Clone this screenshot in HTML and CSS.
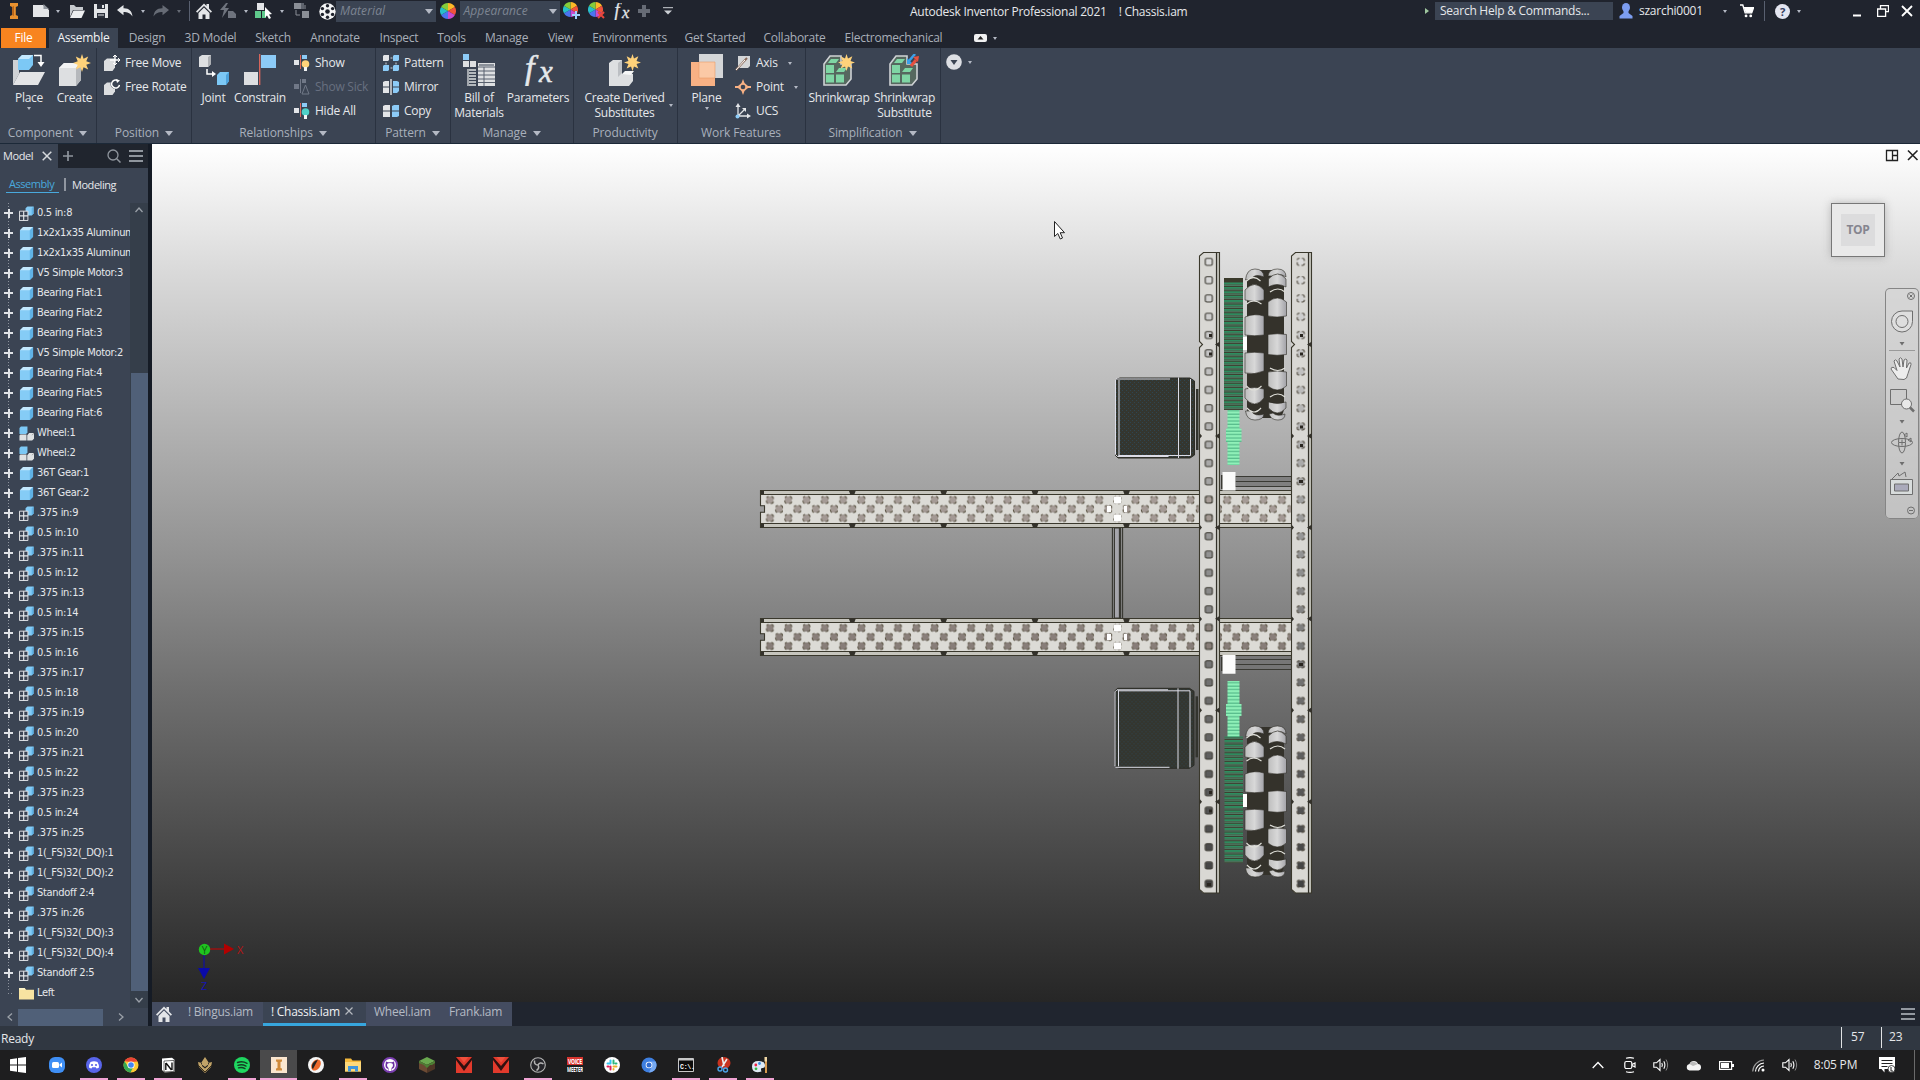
FILE: index.html
```html
<!DOCTYPE html>
<html lang="en">
<head>
<meta charset="utf-8">
<title>Autodesk Inventor Professional 2021</title>
<link rel="stylesheet" href="styles.css">
</head>
<body>
<svg class="defs" width="0" height="0">
  <defs>
    <symbol id="part" viewBox="0 0 16 16"><path d="M1 4.500 4.500 1H15v10.500L11.500 15H1z" fill="#85ccf6"/><path d="M1 4.500 4.500 1H15l-3.500 3.500z" fill="#c4e8fd"/><path d="M11.500 4.500 15 1v10.500L11.500 15z" fill="#5fb2e6"/></symbol>
    <symbol id="multi" viewBox="0 0 16 16"><path d="M7 2.500 9 .5h6.500v7.500l-2 2H7z" fill="#85ccf6"/><path d="M13.500 2.500l2-2V8l-2 2z" fill="#5fb2e6"/><path d="M.5 5.500h9v10h-9z" fill="#3b4453" stroke="#e6e9ec"/><path d="M5 5.500v10M.5 10.500h9" stroke="#e6e9ec" stroke-width="1.200"/></symbol>
    <symbol id="asm" viewBox="0 0 16 16"><path d="M.5 2 2 .5h7V7L7.500 8.500h-7z" fill="#7cc8f5"/><path d="M.5 10 1.500 9H8v6.500H.5zM8.800 9.800l2-2.300H16v6l-2 2H8.800z" fill="#dfe2e4"/><path d="M14 9.800 16 7.500" stroke="#999"/></symbol>
    <symbol id="wheel" viewBox="0 0 16 16"><path d="M8 8V0a8 8 0 0 1 6.900 4z" fill="#fdb827"/><path d="M8 8l6.900-4a8 8 0 0 1 0 8z" fill="#f0533c"/><path d="M8 8l6.900 4A8 8 0 0 1 8 16z" fill="#c94bd0"/><path d="M8 8v8a8 8 0 0 1-6.900-4z" fill="#4a74f0"/><path d="M8 8l-6.900 4a8 8 0 0 1 0-8z" fill="#27bfc9"/><path d="M8 8 1.100 4A8 8 0 0 1 8 0z" fill="#85cc3a"/></symbol>
    <symbol id="star" viewBox="0 0 16 16"><path d="M8 0l1.400 4.200L13.500 2.200 11.800 6.500 16 8l-4.200 1.500 1.700 4.200-4.100-1.900L8 16l-1.400-4.200-4.100 1.900 1.700-4.200L0 8l4.200-1.500-1.700-4.300 4.100 2z" fill="#ffd27a"/></symbol>
    <symbol id="home" viewBox="0 0 16 16"><path d="M0 8.500 8 .5l2.500 2.500V1h2.500v4.500l3 3-1.200 1.200L8 3 1.200 9.700z" fill="#e3e5e8"/><path d="M2.500 10 8 4.500l5.500 5.500v6H9.500v-4.500h-3V16h-4z" fill="#e3e5e8"/></symbol>
    <symbol id="speaker" viewBox="0 0 16 14"><path d="M.8 4.800H3.500L7 1.500v11L3.500 9.200H.8z" fill="none" stroke="#fff" stroke-width="1.100"/><path d="M8.800 5q1.200 2 0 4M10.800 3.300q2.200 3.700 0 7.400" fill="none" stroke="#fff" stroke-width="1.100"/><path d="M13 1.500q3.300 5.500 0 11" fill="none" stroke="#888"/></symbol>
    <symbol id="vex" viewBox="0 0 16 16"><path d="M0 0h16v16H0z" fill="#e23a2c"/><path d="M0 3 8 14 16 3v-3l-8 9-8-9z" fill="#30100f"/><path d="M3.500 0h9L8 5.500z" fill="#f0503c"/></symbol>
    <symbol id="fx" viewBox="0 0 32 32"><g font-family="Liberation Serif" font-style="italic" fill="#e6e8ea" stroke="#e6e8ea" stroke-width=".5"><text x="3" y="25" font-size="34">f</text><text x="17" y="27.500" font-size="31">x</text></g></symbol>
  </defs>
</svg>

<header class="titlebar">
  <div class="qat">
    <svg viewBox="0 0 10 16" width="10" height="16"><path d="M1 0h8v3L6.800 4v8L9 13v3H1v-3l2.200-1V4L1 3z" fill="#e8912f"/><path d="M3.200 4 5 3v10l-1.800-1z" fill="#b5631a"/></svg>
    <svg viewBox="0 0 16 14" width="16" height="14"><path d="M0 1h10l6 5v7H0z" fill="#e3e5e8"/><path d="M10.500 0v5H16z" fill="#8e949c"/></svg>
    <i class="dd"></i>
    <svg viewBox="0 0 16 14" width="16" height="14"><path d="M1 13V1h4l2 2h7v3H4z" fill="#c6cacf"/><path d="M4.500 6.500H16L12.500 14H1z" fill="#eceef0"/></svg>
    <svg viewBox="0 0 14 14" width="14" height="14"><path d="M0 0h14v14H0z" fill="#e3e5e8"/><path d="M3 0h8v5H3zM3 9h8v5H3z" fill="#2a2f3a"/><path d="M8 1h2v3H8zM4 10.500h6v1H4z" fill="#e3e5e8"/></svg>
    <svg viewBox="0 0 16 14" width="16" height="14"><path d="M0 6 6.500 1v3.200C12 4 15 7 15.500 12.500 13 9 10.500 8 6.500 8v3.200z" fill="#e3e5e8"/></svg>
    <i class="dd"></i>
    <svg viewBox="0 0 16 14" width="16" height="14"><path d="M16 6 9.500 1v3.200C4 4 1 7 .5 12.500 3 9 5.500 8 9.500 8v3.200z" fill="#666b75"/></svg>
    <i class="dd dim"></i>
    <i class="vline"></i>
    <svg width="16" height="16"><use href="#home"/></svg>
    <svg viewBox="0 0 16 16" width="16" height="16"><path d="M6 0 0 7h4L2 15 9 5H5l3-5zM8 8h5l3 3v4H8z" fill="#6e737d"/></svg>
    <i class="dd"></i>
    <svg viewBox="0 0 18 16" width="18" height="16"><path d="M2 0h7v7H2z" fill="#e3e5e8"/><path d="M0 8h6v7H0zM7 8h4v7H7z" fill="#5fc98c"/><path d="M10 4l7 7-3 .5 2 3.500-2 1-2-3.500-2 2z" fill="#fff"/></svg>
    <i class="dd"></i>
    <svg viewBox="0 0 17 16" width="17" height="16"><path d="M1 0h7v6H1zM9 8h7v7H9z" fill="#8a8e96"/><path d="M8 0h3v6H8" fill="#5e636d"/><path d="M3 7v5h4M12 2v4" stroke="#8a8e96" fill="none"/></svg>
    <svg viewBox="0 0 17 17" width="17" height="17"><circle cx="8.500" cy="8.500" r="8.200" fill="#f3f4f5"/><g fill="#1c202a"><circle cx="8.500" cy="8.500" r="2.300"/><circle cx="8.500" cy="2.800" r="1.700"/><circle cx="8.500" cy="14.200" r="1.700"/><circle cx="3.400" cy="5.600" r="1.700"/><circle cx="13.600" cy="5.600" r="1.700"/><circle cx="3.400" cy="11.400" r="1.700"/><circle cx="13.600" cy="11.400" r="1.700"/></g></svg>
    <div class="combo">Material<i class="dd lg"></i></div>
    <svg width="16" height="16"><use href="#wheel"/></svg>
    <div class="combo">Appearance<i class="dd lg"></i></div>
    <svg viewBox="0 0 18 18" width="18" height="18"><use href="#wheel" width="15" height="15"/><path d="M13 9v8M9 13h8" stroke="#9fd0ff" stroke-width="2"/></svg>
    <svg viewBox="0 0 18 18" width="18" height="18"><use href="#wheel" width="15" height="15"/><path d="M10 10l6 6M16 10l-6 6" stroke="#e8463c" stroke-width="2"/></svg>
    <svg width="17" height="17"><use href="#fx"/></svg>
    <svg viewBox="0 0 12 12" width="12" height="12"><path d="M6 0v12M0 6h12" stroke="#666b75" stroke-width="4"/></svg>
    <svg viewBox="0 0 10 8" width="10" height="8"><path d="M0 .7h10" stroke="#ccd0d5"/><path d="M1 3.500h8L5 7.500z" fill="#ccd0d5"/></svg>
  </div>
  <div class="caption"><span>Autodesk Inventor Professional 2021</span><span>! Chassis.iam</span></div>
  <div class="account">
    <i class="play"></i>
    <div class="search">Search Help &amp; Commands...</div>
    <svg viewBox="0 0 14 16" width="14" height="16"><ellipse cx="7" cy="4.500" rx="4" ry="4.500" fill="#7c9df0"/><path d="M4.500 8h5v2l4 3v2.500H.5V13l4-3z" fill="#7c9df0"/></svg>
    <span>szarchi0001</span>
    <i class="dd"></i>
    <svg viewBox="0 0 15 15" width="14" height="14"><path d="M0 1h3l2.500 8.500h7L14.500 4H4.500" fill="none" stroke="#fff" stroke-width="1.500"/><path d="M4.500 4h10l-2 5.500h-6.500z" fill="#fff"/><circle cx="6.500" cy="12.800" r="1.500" fill="#fff"/><circle cx="11.500" cy="12.800" r="1.500" fill="#fff"/></svg>
    <i class="vline"></i>
    <svg viewBox="0 0 16 16" width="15" height="15"><circle cx="8" cy="8" r="8" fill="#e3e5f0"/><text x="8" y="12.500" text-anchor="middle" font-family="Open Sans" font-weight="bold" font-size="12" fill="#34405f">?</text></svg>
    <i class="dd"></i>
    <svg viewBox="0 0 10 12" width="10" height="12"><path d="M1 10.500h8" stroke="#fff" stroke-width="2"/></svg>
    <svg viewBox="0 0 12 12" width="12" height="12"><path d="M3.500 4V.7h8v6H9M.6 4h8v7.300h-8z" fill="none" stroke="#fff" stroke-width="1.300"/></svg>
    <svg viewBox="0 0 12 12" width="12" height="12"><path d="M1 1l10 10M11 1 1 11" stroke="#fff" stroke-width="1.800"/></svg>
  </div>
</header>

<nav class="tabs">
  <span class="file">File</span><span class="on">Assemble</span><span>Design</span><span>3D Model</span><span>Sketch</span><span>Annotate</span><span>Inspect</span><span>Tools</span><span>Manage</span><span>View</span><span>Environments</span><span>Get Started</span><span>Collaborate</span><span>Electromechanical</span>
  <div class="minim"><svg viewBox="0 0 13 8" width="13" height="8"><rect width="13" height="8" rx="2" fill="#f0f1f2"/><path d="M3.500 5.500h6L6.500 2z" fill="#222"/></svg><i class="dd"></i></div>
</nav>

<section class="ribbon">
  <div class="panel p-component">
    <div class="tools">
      <div class="big"><svg viewBox="0 0 32 32" width="32" height="32"><path d="M0 6h6v14L0 31z" fill="#cfd2d5"/><path d="M0 31 7 18h25l-7 13z" fill="#e3e4e6"/><path d="M5 5l4-4h11v10l-4 5H5z" fill="#7cc8f5"/><path d="M5 5l4-4h11l-4 4z" fill="#c4e8fd"/><path d="M21 1.500h7V9" fill="none" stroke="#fff" stroke-width="1.500"/><path d="M24.500 8h7L28 13z" fill="#fff"/></svg><b>Place</b><i class="dd"></i></div>
      <div class="big"><svg viewBox="0 0 32 32" width="32" height="32"><path d="M0 14l5-5h17v17l-5 6H0z" fill="#dddfe1"/><path d="M0 14l5-5h17l-5 5z" fill="#f3f4f5"/><path d="M17 14l5-5v17l-5 6z" fill="#b5b8bc"/><use href="#star" x="14" y="0" width="18" height="18"/></svg><b>Create</b></div>
    </div>
    <h3>Component<i class="dd lg"></i></h3>
  </div>
  <div class="panel p-position">
    <div class="tools">
      <ul class="small">
        <li><svg viewBox="0 0 16 16" width="16" height="16"><path d="M0 6l3-2.500h8v9L8.500 16H0z" fill="#dcdee0"/><path d="M11 0v10M6 5h10" stroke="#fff" stroke-width="1.400"/><path d="M9 2l2-2 2 2M14 3l2 2-2 2M9 8l2 2 2-2" stroke="#fff" fill="none"/></svg>Free Move</li>
        <li><svg viewBox="0 0 16 16" width="16" height="16"><path d="M0 6l3-2.500h8v9L8.500 16H0z" fill="#dcdee0"/><circle cx="11.500" cy="5" r="5" fill="#3b4453"/><path d="M13.500 1.500A4 4 0 1 0 15.500 6" stroke="#fff" stroke-width="1.500" fill="none"/><path d="M12 0l4 1.500-3 2.500z" fill="#fff"/></svg>Free Rotate</li>
      </ul>
    </div>
    <h3>Position<i class="dd lg"></i></h3>
  </div>
  <div class="panel p-relations">
    <div class="tools">
      <div class="big"><svg viewBox="0 0 32 32" width="32" height="32"><path d="M1 3l3-2h9v9l-3 3H1z" fill="#dddfe1"/><path d="M10 3l3-2v9l-3 3z" fill="#adb0b4"/><path d="M9 15v5h5" stroke="#fff" fill="none" stroke-width="1.500"/><path d="M14 17l4 3-4 3z" fill="#fff"/><path d="M19 21l3-3h9v9l-3 4h-9z" fill="#7cc8f5"/><path d="M28 21l3-3v9l-3 4z" fill="#4da3dc"/></svg><b>Joint</b></div>
      <div class="big"><svg viewBox="0 0 32 32" width="32" height="32"><path d="M0 18h14v13H0z" fill="#dddfe1"/><path d="M17 1h15v13H17z" fill="#8ccbf7"/><path d="M15.700 0v31" stroke="#e0675c" stroke-width="1.300"/></svg><b>Constrain</b></div>
      <ul class="small">
        <li><svg viewBox="0 0 16 16" width="16" height="16"><path d="M0 5h5v5H0z" fill="#e3e5e8"/><path d="M6.500 0v14" stroke="#e0675c"/><path d="M8 0h5v4H8z" fill="#8ccbf7"/><circle cx="11.500" cy="9" r="3.800" fill="#ffd27a"/><path d="M10 12h3v4h-3z" fill="#f3f4f5"/></svg>Show</li>
        <li class="off"><svg viewBox="0 0 16 16" width="16" height="16"><path d="M0 5h5v5H0zM8 0h4v4H8z" fill="#707887"/><path d="M6.500 0v14M8 15l3.500-9 3.500 9z" stroke="#707887" fill="none"/></svg>Show Sick</li>
        <li><svg viewBox="0 0 16 16" width="16" height="16"><path d="M0 5h5v5H0z" fill="#e3e5e8"/><path d="M6.500 0v14" stroke="#e0675c"/><path d="M8 0h5v4H8z" fill="#8ccbf7"/><circle cx="11.500" cy="9" r="3.800" fill="#4fd0c8"/><path d="M10 12h3v4h-3z" fill="#f3f4f5"/></svg>Hide All</li>
      </ul>
    </div>
    <h3>Relationships<i class="dd lg"></i></h3>
  </div>
  <div class="panel p-pattern">
    <div class="tools">
      <ul class="small">
        <li><svg viewBox="0 0 16 16" width="16" height="16"><path d="M0 1l1-1h5v5l-1 1H0z" fill="#e3e5e8"/><path d="M10 1l1-1h5v5l-1 1h-5zM0 11l1-1h5v5l-1 1H0zM10 11l1-1h5v5l-1 1h-5z" fill="#8ccbf7"/><path d="M7.500 3h2M3 7.500v2M13 7.500v2M7.500 13h2" stroke="#cfd3d8"/></svg>Pattern</li>
        <li><svg viewBox="0 0 16 16" width="16" height="16"><path d="M0 3l2-1h4v12H0z" fill="#e3e5e8"/><path d="M10 2h4l2 1v9l-2 2h-4z" fill="#8ccbf7"/><path d="M8 0v16" stroke="#fff" stroke-width="1.200"/><path d="M0 8h6M10 8h6" stroke="#3b4453"/></svg>Mirror</li>
        <li><svg viewBox="0 0 16 16" width="16" height="16"><path d="M0 3l2-1h5v12H0z" fill="#e3e5e8"/><path d="M9 3l2-1h5v11l-2 1H9z" fill="#8ccbf7"/><path d="M0 8h16" stroke="#3b4453"/></svg>Copy</li>
      </ul>
    </div>
    <h3>Pattern<i class="dd lg"></i></h3>
  </div>
  <div class="panel p-manage">
    <div class="tools">
      <div class="big"><svg viewBox="0 0 32 32" width="32" height="32"><path d="M0 0h6v6H0z" fill="#8ccbf7"/><path d="M0 7h6v6H0zM7 7h6v6H7zM15 9h17v23H15z" fill="#dddfe1"/><path d="M15 13h17M15 17h17M15 21h17M15 25h17M15 28.500h17M21 13v19" stroke="#59616e"/><path d="M5 15v17M6 16h7M6 19h7M6 22h7M6 25h7M6 28h7M6 31h7" stroke="#dddfe1" stroke-width="1.300"/><path d="M16 10h15v2H16z" fill="#8a9099"/></svg><b>Bill of<br>Materials</b></div>
      <div class="big"><svg width="32" height="32"><use href="#fx"/></svg><b>Parameters</b></div>
    </div>
    <h3>Manage<i class="dd lg"></i></h3>
  </div>
  <div class="panel p-product">
    <div class="tools">
      <div class="big"><svg viewBox="0 0 32 32" width="32" height="32"><path d="M0 9l4-3h9v14h11v7l-4 5H0z" fill="#dddfe1"/><path d="M13 20l3-3h9l-3 4z" fill="#f6f7f7"/><path d="M9 9l4-3v13l-4 4z" fill="#bcbfc3"/><use href="#star" x="15" y="0" width="17" height="17"/></svg><b>Create Derived<br>Substitutes</b></div>
      <i class="dd side"></i>
    </div>
    <h3>Productivity</h3>
  </div>
  <div class="panel p-work">
    <div class="tools">
      <div class="big"><svg viewBox="0 0 32 32" width="32" height="32"><path d="M8 0h24v24H8z" fill="#d4d6d8"/><path d="M0 8h24v24H0z" fill="#f8b184"/><path d="M8 8h16v16H8z" fill="#fbc9a6" stroke="#e79a68" stroke-width=".6"/></svg><b>Plane</b><i class="dd"></i></div>
      <ul class="small">
        <li><svg viewBox="0 0 16 16" width="16" height="16"><path d="M3 1h12v10l-2 2H3z" fill="#d4d6d8"/><path d="M12 3 1 15" stroke="#8b6a5a" stroke-width="2"/><path d="M10 5 1 15" stroke="#fff"/></svg>Axis<i class="dd"></i></li>
        <li><svg viewBox="0 0 16 16" width="16" height="16"><path d="M8 0l1.500 4L13 7h3v2h-3l-3.500 3L8 16l-1.500-4L3 9H0V7h3l3.500-3z" fill="#f8b184"/><circle cx="8" cy="8" r="2.300" fill="#3b4453"/></svg>Point<i class="dd"></i></li>
        <li><svg viewBox="0 0 16 16" width="16" height="16"><path d="M3 2v11h11M3 13l7-7" stroke="#e3e5e8" fill="none" stroke-width="1.300"/><path d="M.5 4 3 0l2.500 4zM12 10.500l4 2.500-4 2.500zM7 5h4v4z" fill="#e3e5e8"/><circle cx="2.500" cy="13.500" r="2" fill="#8ccbf7"/></svg>UCS</li>
      </ul>
    </div>
    <h3>Work Features</h3>
  </div>
  <div class="panel p-simple">
    <div class="tools">
      <div class="big"><svg viewBox="0 0 32 32" width="32" height="32"><path d="M1 10l6-8h11v8h10v15l-5 6H1z" fill="#56685f" stroke="#cfd2d5" stroke-width="1.600"/><path d="M3 11h8v8H3zM3 20.500h8v8H3zM13 20.500h8v8h-8zM5 9l3-4h8l-3 4zM13 18l3-4h8l-3 4z" fill="#7fd6a4"/><use href="#star" x="15" y="0" width="17" height="17"/></svg><b>Shrinkwrap</b></div>
      <div class="big"><svg viewBox="0 0 32 32" width="32" height="32"><path d="M1 10l6-8h11v8h10v15l-5 6H1z" fill="#56685f" stroke="#cfd2d5" stroke-width="1.600"/><path d="M3 11h8v8H3zM3 20.500h8v8H3zM13 20.500h8v8h-8zM5 9l3-4h8l-3 4zM13 18l3-4h8l-3 4z" fill="#7fd6a4"/><path d="M26 0 20 7" stroke="#3aa0ea" stroke-width="2.500"/><path d="M18 4v6h6z" fill="#3aa0ea"/><path d="M22 12l5-6" stroke="#e6503f" stroke-width="3"/><path d="M24 3l6-1-1 6z" fill="#e6503f"/></svg><b>Shrinkwrap<br>Substitute</b></div>
    </div>
    <h3>Simplification<i class="dd lg"></i></h3>
  </div>
  <div class="more"><svg viewBox="0 0 16 16" width="16" height="16"><circle cx="8" cy="8" r="7.800" fill="#dddfe4"/><path d="M4.500 6h7L8 11z" fill="#3b4453"/></svg><i class="dd"></i></div>
</section>

<main class="work">
  <aside class="browser">
    <div class="btabs">
      <span class="cur">Model<svg viewBox="0 0 10 10" width="10" height="10"><path d="M.7.7l8.600 8.600M9.300.7.7 9.300" stroke="#d6d9dd" stroke-width="1.500"/></svg></span>
      <svg viewBox="0 0 10 10" width="10" height="10"><path d="M5 0v10M0 5h10" stroke="#8f959d" stroke-width="1.700"/></svg>
      <svg viewBox="0 0 14 14" width="14" height="14" class="mag"><circle cx="6" cy="6" r="5" fill="none" stroke="#8f959d" stroke-width="1.300"/><path d="M9.700 9.700 13.500 13.500" stroke="#8f959d" stroke-width="1.500"/></svg>
      <svg viewBox="0 0 14 12" width="14" height="12"><path d="M0 1h14M0 6h14M0 11h14" stroke="#8f959d" stroke-width="1.800"/></svg>
    </div>
    <div class="modes"><span class="sel">Assembly</span><i></i><span>Modeling</span></div>
    <div class="treewrap">
      <ul class="tree">
        <li><svg><use href="#multi"/></svg>0.5 in:8</li>
        <li><svg><use href="#part"/></svg>1x2x1x35 Aluminum</li>
        <li><svg><use href="#part"/></svg>1x2x1x35 Aluminum</li>
        <li><svg><use href="#part"/></svg>V5 Simple Motor:3</li>
        <li><svg><use href="#part"/></svg>Bearing Flat:1</li>
        <li><svg><use href="#part"/></svg>Bearing Flat:2</li>
        <li><svg><use href="#part"/></svg>Bearing Flat:3</li>
        <li><svg><use href="#part"/></svg>V5 Simple Motor:2</li>
        <li><svg><use href="#part"/></svg>Bearing Flat:4</li>
        <li><svg><use href="#part"/></svg>Bearing Flat:5</li>
        <li><svg><use href="#part"/></svg>Bearing Flat:6</li>
        <li><svg><use href="#asm"/></svg>Wheel:1</li>
        <li><svg><use href="#asm"/></svg>Wheel:2</li>
        <li><svg><use href="#part"/></svg>36T Gear:1</li>
        <li><svg><use href="#part"/></svg>36T Gear:2</li>
        <li><svg><use href="#multi"/></svg>.375 in:9</li>
        <li><svg><use href="#multi"/></svg>0.5 in:10</li>
        <li><svg><use href="#multi"/></svg>.375 in:11</li>
        <li><svg><use href="#multi"/></svg>0.5 in:12</li>
        <li><svg><use href="#multi"/></svg>.375 in:13</li>
        <li><svg><use href="#multi"/></svg>0.5 in:14</li>
        <li><svg><use href="#multi"/></svg>.375 in:15</li>
        <li><svg><use href="#multi"/></svg>0.5 in:16</li>
        <li><svg><use href="#multi"/></svg>.375 in:17</li>
        <li><svg><use href="#multi"/></svg>0.5 in:18</li>
        <li><svg><use href="#multi"/></svg>.375 in:19</li>
        <li><svg><use href="#multi"/></svg>0.5 in:20</li>
        <li><svg><use href="#multi"/></svg>.375 in:21</li>
        <li><svg><use href="#multi"/></svg>0.5 in:22</li>
        <li><svg><use href="#multi"/></svg>.375 in:23</li>
        <li><svg><use href="#multi"/></svg>0.5 in:24</li>
        <li><svg><use href="#multi"/></svg>.375 in:25</li>
        <li><svg><use href="#multi"/></svg>1(_FS)32(_DQ):1</li>
        <li><svg><use href="#multi"/></svg>1(_FS)32(_DQ):2</li>
        <li><svg><use href="#multi"/></svg>Standoff 2:4</li>
        <li><svg><use href="#multi"/></svg>.375 in:26</li>
        <li><svg><use href="#multi"/></svg>1(_FS)32(_DQ):3</li>
        <li><svg><use href="#multi"/></svg>1(_FS)32(_DQ):4</li>
        <li><svg><use href="#multi"/></svg>Standoff 2:5</li>
        <li class="leaf"><svg viewBox="0 0 16 16"><path d="M0 2h6l1.500 2H16v10.500H0z" fill="#f7e3a1"/><path d="M0 2h6l1 2H0z" fill="#fdf3c8"/></svg>Left</li>
      </ul>
      <div class="vscroll">
        <svg viewBox="0 0 8 6" width="8" height="6"><path d="M.5 5 4 1l3.500 4" fill="none" stroke="#9aa0a8" stroke-width="1.300"/></svg>
        <i></i>
        <svg viewBox="0 0 8 6" width="8" height="6"><path d="M.5 1 4 5l3.500-4" fill="none" stroke="#9aa0a8" stroke-width="1.300"/></svg>
      </div>
    </div>
    <div class="hscroll">
      <svg viewBox="0 0 6 8" width="6" height="8"><path d="M5 .5 1 4l4 3.500" fill="none" stroke="#9aa0a8" stroke-width="1.300"/></svg>
      <i></i>
      <svg viewBox="0 0 6 8" width="6" height="8"><path d="M1 .5 5 4 1 7.500" fill="none" stroke="#9aa0a8" stroke-width="1.300"/></svg>
    </div>
  </aside>

  <div class="stage">
    <div class="view">
      <svg class="model" viewBox="152 144 1768 858" width="1768" height="858">
        <defs>
          <pattern id="barCut" patternUnits="userSpaceOnUse" x="760.86" y="494.500" width="18.286" height="29">
            <g fill="#000"><rect x="5.600" y="2" width="7" height="7" rx="2"/><rect x="-3.500" y="11" width="7" height="7" rx="2"/><rect x="14.800" y="11" width="7" height="7" rx="2"/><rect x="5.600" y="20" width="7" height="7" rx="2"/></g>
          </pattern>
          <pattern id="barRim" patternUnits="userSpaceOnUse" x="760.86" y="494.500" width="18.286" height="29">
            <g fill="#c08a70" fill-opacity=".18" stroke="#57503f" stroke-dasharray="3.500 2.640" stroke-dashoffset="-2.800"><rect x="5.600" y="2" width="7" height="7" rx="2"/><rect x="-3.500" y="11" width="7" height="7" rx="2"/><rect x="14.800" y="11" width="7" height="7" rx="2"/><rect x="5.600" y="20" width="7" height="7" rx="2"/></g>
          </pattern>
          <pattern id="chCut" patternUnits="userSpaceOnUse" x="1199.500" y="252.860" width="21" height="18.290"><rect x="5.800" y="5.500" width="7" height="7" rx="1.500"/></pattern>
          <pattern id="chRim" patternUnits="userSpaceOnUse" x="1199.500" y="252.860" width="21" height="18.290"><rect x="5.800" y="5.500" width="7" height="7" rx="1.500" fill="none" stroke="#35332b" stroke-width="1.100"/></pattern>
          <pattern id="chRim2" patternUnits="userSpaceOnUse" x="1199.500" y="252.860" width="21" height="18.290"><rect x="5.800" y="5.500" width="7" height="7" rx="1.500" fill="none" stroke="#4a4438" stroke-width="1.100" stroke-dasharray="4.160 2.200" stroke-dashoffset="-3.100"/></pattern>
          <mask id="barMask" maskUnits="userSpaceOnUse" x="760" y="489" width="532" height="40"><path d="M760 489h532v40H760z" fill="#fff"/><path d="M760 494.500h532v29H760z" fill="url(#barCut)"/></mask>
          <mask id="chMask" maskUnits="userSpaceOnUse" x="1199" y="252" width="22" height="642"><path d="M1199 252h22v642h-22z" fill="#fff"/><path d="M1199.500 252.860h21v640.150h-21z" fill="url(#chCut)"/></mask>
          <pattern id="teeth" patternUnits="userSpaceOnUse" width="19" height="4.400"><path d="M0 0h19v4.400H0z" fill="#3e3a2c"/><path d="M0 1h19v1.500H0z" fill="#2b9a68"/><path d="M0 3.200h19v.8H0z" fill="#5ab090"/></pattern>
          <pattern id="teethLt" patternUnits="userSpaceOnUse" width="14" height="3.400"><path d="M0 0h14v3.400H0z" fill="#8ff0b8"/><path d="M0 2.200h14v1.100H0z" fill="#4fb586"/></pattern>
          <pattern id="mesh" patternUnits="userSpaceOnUse" width="4" height="4"><path d="M0 0h4v4H0z" fill="#34362f"/><path d="M0 0h1v1H0zM2 2h1v1H2z" fill="#2f4550"/></pattern>
          <linearGradient id="roll"><stop offset="0" stop-color="#bdbdbd"/><stop offset=".5" stop-color="#d8d8d8"/><stop offset="1" stop-color="#a2a2a8"/></linearGradient>
          <g id="nick"><path d="M-3.500-2h7L2 2h-4z" fill="#33312a"/></g>
          <g id="bar">
            <g mask="url(#barMask)"><path d="M760.500 490.500H1291v37H760.500v-15.200h4v-6.500h-4z" fill="#dcdbd6"/><path d="M761 491h530v3H761zM761 524h530v3H761z" fill="#c6c5bd"/></g>
            <path d="M764.500 494.500H1291v29H764.500z" fill="url(#barRim)"/>
            <path d="M1291 490.500H760.500v15.300h4v6.500h-4v15.200H1291M761 494.500h530M761 523.500h530" fill="none" stroke="#3a382c" stroke-width="1.100"/>
            <path d="M1112 495h10.500v27.500H1112z" fill="#dcdbd6" fill-opacity=".01"/>
            <g fill="#fff"><rect x="1114" y="496.500" width="7" height="7"/><rect x="1114" y="514.500" width="7" height="7"/><path d="M1107 506h4v6h-4zM1124 506h3v6h-3z"/></g>
            <use href="#nick" x="852.300" y="492.500"/><use href="#nick" x="943.700" y="492.500"/><use href="#nick" x="1035" y="492.500"/><use href="#nick" x="1126.500" y="492.500"/>
            <use href="#nick" x="852.300" y="525.500"/><use href="#nick" x="943.700" y="525.500"/><use href="#nick" x="1035" y="525.500"/><use href="#nick" x="1126.500" y="525.500"/>
            <path d="M761 491h3v3h-3zM761 524h3v3h-3z" fill="#33312a"/>
          </g>
          <g id="channel">
            <g mask="url(#chMask)"><path d="M1199.500 256l4-3.500h16V893h-16.500l-3.500-3.500z" fill="#d9d8d4"/><path d="M1217 253h2v640h-2z" fill="#c3c3bb"/></g>
            <path d="M1199.500 341.500V256l4-3.500h16V893h-16l-4-3.500V347.500l3-3z" fill="none" stroke="#3a382c" stroke-width="1.100"/>
            <path d="M1216.500 253v640" stroke="#33312a" stroke-width="1.200"/>
            <g fill="#33312a"><path id="nk" d="M1220 341.500v6l-5-3z"/><use href="#nk" y="91.450"/><use href="#nk" y="182.900"/><use href="#nk" y="274.300"/><use href="#nk" y="365.800"/><use href="#nk" y="457.200"/>
            <path id="nl" d="M1199.500 433v6l2.500-3z"/><use href="#nl" y="91.450"/><use href="#nl" y="182.900"/><use href="#nl" y="274.300"/><use href="#nl" y="365.800"/></g>
          </g>
          <g id="motor">
            <path d="M1196 389h2.500v61h-2.500z" fill="#33342e"/>
            <path d="M1117 379l3-1h70l4.500 3v74l-4.500 3h-72l-2.500-2.500v-74z" fill="url(#mesh)" stroke="#2c2c26"/>
            <path d="M1115.500 380v74.500l2 2h51M1119 380v76M1116 379h54M1178.500 377.500V458M1190.500 379v76.500h-72" fill="none" stroke="#dcdce6"/>
          </g>
        </defs>

        <g fill="none" stroke="#3a3a34"><path d="M1114.500 528h6v90h-6z" fill="#a6a6ac"/><path d="M1112.500 528v90M1119.500 528v90M1122.500 528v90" stroke-width="1.300"/></g>
        <use href="#motor"/>
        <use href="#motor" transform="translate(-.5 1146.300) scale(1 -1)"/>
        <g stroke="#3a3a34"><path d="M1235 476.500h56.500v10H1235zM1235 481.500h56.500" fill="#808080"/><path d="M1235 659.500h56.500M1235 664.500h56.500M1235 669.500h56.500" fill="none"/></g>
        <use href="#bar"/>
        <use href="#bar" y="128"/>
        <path d="M1221 475h3v14h-3zM1221 657h3v14h-3z" fill="#3a3a34"/>
        <path d="M1222.500 472h13v18.500h-13zM1222.500 655h13v18.700h-13z" fill="#fbfbfb"/>

        <path d="M1227.500 409.500h12V465h-12zM1226 428.500h15.500V442H1226zM1227.500 681h12v56h-12zM1226 704h15.500v12H1226z" fill="url(#teethLt)"/>
        <path d="M1224 278h19v132h-19zM1224.500 736.500h18.500V863h-18.500z" fill="url(#teeth)"/>
        <path d="M1224 278h19v4h-19z" fill="#3a3a2c"/>
        <g id="wheelTop">
          <path d="M1247 278q3-8 9-8h20q6 0 8 8v132q-2 8-8 8h-20q-6 0-9-8z" fill="#34322b"/>
          <path d="M1243 337h4v13h-4z" fill="#fff"/>
          <g fill="url(#roll)" stroke="#2d2b25" stroke-width=".6">
            <path d="M1245.500 280q1-11 9.500-11t9 8q-9-4-13 2zM1245.500 411q1 9 9.500 9t9-6q-9 3-13-3z"/>
            <path d="M1245 290q9.500-11 19 0v10q-9.500 3-19 0zM1245 317q9.500-4 19-1v19q-9.500 1.500-19 0zM1245 353q9.500-1.500 19 0v18q-9.500 4-19 2zM1245 389q9.500-3 19 0v9q-9.500 12-19 0z"/>
            <path d="M1268 276q1-7 9.500-7t8.500 8q-8-5-13-1zM1269 414q2 6 9 6t7-6q-8 3-12-1z"/>
            <path d="M1268.500 279q9-10 17.500 0v8q-9-5-17.500 0zM1268 302q9.500-8 18.500 0v14q-9.500 2-18.500 0zM1268 334.500q9.500-1.500 18.500 0v20q-9.500 1.500-18.500 0zM1268 372q9.500-2 18.500 0v14q-9.500 8-18.500 0zM1268.500 402q9 3 17.500 0v6q-9 10-17.500 0z"/>
          </g>
          <path d="M1246.500 281q7-7 14 0M1246.500 304q7-6 15 0M1246.500 386q7 8 15 0M1247 408q7 8 14 0M1270 292q8-6 15 0M1270 397q8-6 15 0M1270 368q8 5 15 0" fill="none" stroke="#deded8" stroke-width="1.200"/>
        </g>
        <use href="#wheelTop" y="457"/>

        <use href="#channel"/><path d="M1199.500 252.860h16.500v640.150h-16.500z" fill="url(#chRim)"/>
        <g transform="translate(92 0)"><use href="#channel"/><path d="M1199.500 252.860h16v640.150h-16z" fill="url(#chRim2)"/></g>
        <g fill="#2a2620"><path d="M1209 334h3v3h-3zM1209 352.500h3v3h-3zM1300 334h3v3h-3zM1300 352.500h3v3h-3zM1300 425.500h3v3h-3zM1300 444h3v3h-3zM1207 883h4v3h-4zM1209 791h3v3h-3zM1209 809.500h3v3h-3zM1299 480h4v3h-4zM1299 663h4v3h-4z"/></g>

        <path d="M204 955v14" stroke="#0808b8"/><path d="M198 968h12l-6 11z" fill="#0a0aa8"/>
        <path d="M210 949h15" stroke="#c00"/><path d="M224 943.500v11l10-5.500z" fill="#b30000"/>
        <circle cx="204.500" cy="949.500" r="5.700" fill="#1fc41f"/>
        <g font-family="Open Sans" font-size="11" text-anchor="middle"><text x="204.500" y="953.500" font-size="10" fill="#115a11">Y</text><text x="240" y="953.500" fill="#b81414">X</text><text x="204" y="989.500" fill="#1515b5">Z</text></g>
        <path d="M1054.500 221.500v15l3.300-3 2.500 5.500 2.200-1-2.300-5.300h4.300z" fill="#fff" stroke="#222"/>
        <path d="M1886.500 150.500h11v10h-11zM1892.500 150.500v10M1892.500 155.500h5" fill="none" stroke="#222" stroke-width="1.300"/>
        <path d="M1908 150.500l9.500 9.500M1917.500 150.500 1908 160" stroke="#222" stroke-width="1.600"/>
      </svg>
      <div class="cube"><span>TOP</span></div>
      <div class="navbar">
        <svg viewBox="0 0 34 231" width="34" height="231" fill="none" stroke="#6e6e6e">
          <circle cx="26" cy="8" r="3.500"/><path d="M24.500 6.500l3 3M27.500 6.500l-3 3"/>
          <path d="M17 23h10.500v10.500A10.500 10.500 0 1 1 17 23z" fill="#dedede"/><circle cx="17" cy="33.500" r="6"/>
          <path d="M14.500 54h5L17 57.500zM14.500 132h5l-2.500 3.500zM14.500 174h5l-2.500 3.500z" fill="#6e6e6e" stroke="none"/>
          <path d="M4 62.500h26" stroke="#9a9a9a"/>
          <path d="M13 91 6 81q0-2.500 3-1.500l3 3-3-9.500q1-2.500 3 0l3 6-1-8q1.500-2.500 3 0l1 8 1-7q2-2 3 0l-.5 8 2.500-5q2.500-1 2 1.500l-3 9q-1 6-4 6z" fill="#ececec"/>
          <path d="M5.500 101.500h16v15h-16z" fill="#ccc" fill-opacity=".5"/><circle cx="21.500" cy="116" r="5" fill="#e8e8e8"/><path d="M25 119.500l4 4" stroke-width="2.500"/>
          <ellipse cx="17" cy="154.500" rx="10.500" ry="4"/><ellipse cx="17" cy="154.500" rx="3.500" ry="10.500"/><path d="M14 154.500h6M17 151.500v6M19 147l3-2v4zM23 152l3-2v4z"/>
          <path d="M5.500 191.500h22v15h-22z" fill="#d8dcdc"/><path d="M9.500 196h14v7h-14z" fill="#aab"/><path d="M7 191l6-6 1 3 6-4 1 5"/>
          <circle cx="26" cy="222.500" r="3.500"/><path d="M24 222.500h4"/>
        </svg>
      </div>
    </div>
    <div class="docs">
      <span class="homeTab"><svg width="16" height="16"><use href="#home"/></svg></span>
      <span>! Bingus.iam</span>
      <span class="on">! Chassis.iam<svg viewBox="0 0 8 8" width="8" height="8"><path d="M.5.5l7 7M7.500.5l-7 7" stroke="#b5b9bf" stroke-width="1.200"/></svg></span>
      <span>Wheel.iam</span>
      <span>Frank.iam</span>
      <svg class="burger" viewBox="0 0 14 12" width="14" height="12"><path d="M0 1h14M0 6h14M0 11h14" stroke="#b8bec6" stroke-width="1.600"/></svg>
    </div>
  </div>
</main>

<div class="status"><span>Ready</span><em>57</em><em class="last">23</em></div>

<footer class="taskbar">
  <div class="apps">
    <span class="start"><svg viewBox="0 0 16 16"><path d="M0 2.300 7 1.300v6.200H0zM8 1.100 16 0v7.500H8zM0 8.500h7v6.200l-7-1zM8 8.500h8V16l-8-1.100z" fill="#fff"/></svg></span>
    <span><svg viewBox="0 0 16 16"><rect width="16" height="16" rx="6" fill="#3f8ff5"/><rect x="3" y="5" width="7" height="6" rx="1.500" fill="#fff"/><path d="M10.500 7.500 13 5.500v5l-2.500-2z" fill="#fff"/></svg></span>
    <span class="run"><svg viewBox="0 0 16 16"><circle cx="8" cy="8" r="8" fill="#5965ea"/><path d="M4.500 5q3.500-1.500 7 0 1.800 3 1.500 5.500-1.500 1-2.500 1l-.7-1.200H6.200l-.7 1.200q-1 0-2.500-1Q2.700 8 4.500 5z" fill="#fff"/><circle cx="6" cy="8" r="1.100" fill="#5965ea"/><circle cx="10" cy="8" r="1.100" fill="#5965ea"/></svg></span>
    <span class="run"><svg viewBox="0 0 16 16"><circle cx="8" cy="8" r="7.500" fill="#fcc934"/><path d="M1.500 4.200A7.500 7.500 0 0 1 14.500 4.500L8 5z" fill="#ea4335"/><path d="M1.500 4.200A7.500 7.500 0 0 0 7.500 15.500l3-6L5 9.500z" fill="#34a853"/><circle cx="8" cy="8" r="3.600" fill="#fff"/><circle cx="8" cy="8" r="2.800" fill="#4285f4"/></svg></span>
    <span class="run"><svg viewBox="0 0 16 16"><path d="M2 1.500 12 .8l2.500 2v12L4.500 15.500 2 13z" fill="#fff"/><path d="M4 4l10-.6v11L4 15z" fill="#fff" stroke="#111" stroke-width=".6"/><path d="M5.800 13V6M6 6l5.500 7M12 13V5.500" stroke="#111" stroke-width="1.400"/></svg></span>
    <span><svg viewBox="0 0 16 16"><path d="M8 0 5 4.500 8 7l3-2.500zM1 5l4 1v3l3 2.500L11 9V6l4-1-1 5-6 6-6-6zM5 4.500 4 7l4 3 4-3-1-2.500-3 2.500z" fill="#c2a468"/><path d="M1 8l7 7 7-7" stroke="#3a301c" fill="none"/></svg></span>
    <span class="run"><svg viewBox="0 0 16 16"><circle cx="8" cy="8" r="8" fill="#1ed760"/><path d="M3.500 5.500q5-1.700 9.500.8M4 8.300q4.200-1.300 8 .8M4.500 10.900q3.500-1 6.500.7" fill="none" stroke="#143d22" stroke-width="1.400" stroke-linecap="round"/></svg></span>
    <span class="run active"><svg viewBox="0 0 16 16"><path d="M0 0h16v16H0z" fill="#fbe6cf"/><path d="M5 2.500h6v2L9.500 5v6l1.500.5v2H5v-2l1.500-.5V5L5 4.500z" fill="#d08a3a"/></svg></span>
    <span><svg viewBox="0 0 16 16"><circle cx="8" cy="8" r="8" fill="#f6f6f6"/><ellipse cx="8" cy="8" rx="4.200" ry="6" fill="#ee6a2c" transform="rotate(35 8 8)"/><path d="M4 11Q3 5 10 2.500L5 12z" fill="#222"/></svg></span>
    <span class="run"><svg viewBox="0 0 16 16"><path d="M0 1.500h6l1.500 2H16v11H0z" fill="#f5b93c"/><path d="M0 5h16v9.500H0z" fill="#fdd87a"/><path d="M3 14.500V9h10v5.500h-3v-2.500H6v2.500z" fill="#3f95dc"/></svg></span>
    <span><svg viewBox="0 0 16 16"><circle cx="8" cy="8" r="7" fill="#fff" stroke="#7b3fb0" stroke-width="2"/><path d="M6 14.500V12q-3-1-2.500-4.500L4 4.500l2 .7h4l2-.7.500 3Q13 11 10 12v2.500z" fill="#6c2fa3"/><path d="M6.500 14v-3Q5 10 5 8t3-2 3 2-1.500 3v3z" fill="#fff"/></svg></span>
    <span><svg viewBox="0 0 16 16"><path d="M0 4 8 0l8 4-8 4z" fill="#6aa84f"/><path d="M0 4l8 4v8l-8-4z" fill="#6b4a33"/><path d="M16 4 8 8v8l8-4z" fill="#4e3626"/><path d="M0 4l8 4 8-4v2l-3 2-2 0-3 3-3-3-5-2z" fill="#4c8034"/></svg></span>
    <span><svg><use href="#vex"/></svg></span>
    <span><svg><use href="#vex"/></svg></span>
    <span class="run"><svg viewBox="0 0 16 16"><circle cx="8" cy="8" r="7.300" fill="#25252a" stroke="#b5b5b5" stroke-width="1.100"/><path d="M8 8Q4 8 4.500 3.500M8 8q2-3.500 5.500-1M8 8q2 3.500-1.500 5.500" fill="none" stroke="#b5b5b5" stroke-width="1.500"/></svg></span>
    <span><svg viewBox="0 0 16 16"><path d="M0 0h16v8H0z" fill="#d8352f"/><text x="8" y="6.500" text-anchor="middle" textLength="14" lengthAdjust="spacingAndGlyphs" font-family="Open Sans" font-weight="bold" font-size="6.500" fill="#fff">VOICE</text><text x="8" y="15" text-anchor="middle" textLength="16" lengthAdjust="spacingAndGlyphs" font-family="Open Sans" font-weight="bold" font-size="6.500" fill="#fff">MEETER</text></svg></span>
    <span><svg viewBox="0 0 16 16"><circle cx="8" cy="8" r="8" fill="#fff"/><g stroke-width="2" stroke-linecap="round"><path d="M6.500 3.500v3" stroke="#36c5f0"/><path d="M3.500 6.500h2" stroke="#36c5f0"/><path d="M9.500 3.500v3M11.500 6.500h1" stroke="#2eb67d"/><path d="M9.500 9.500h3M9.500 12v.5" stroke="#ecb22e"/><path d="M6.500 9.500v3M3.500 9.500h1" stroke="#e01e5a"/></g></svg></span>
    <span><svg viewBox="0 0 16 16"><circle cx="8" cy="8" r="7.500" fill="#3e7fe0"/><path d="M8 4.500h6.700A7.500 7.500 0 0 1 8 15.500l3-6z" fill="#76a9f2"/><circle cx="8" cy="8" r="3.300" fill="#fff"/><circle cx="8" cy="8" r="2.500" fill="#2f6bd0"/></svg></span>
    <span class="run"><svg viewBox="0 0 16 16"><path d="M.5 1.500h15v13H.5z" fill="#0c0c0c" stroke="#c8c8c8"/><path d="M1 1.500h14v2H1z" fill="#c8c8c8"/><text x="2" y="11.500" font-family="Liberation Mono" font-weight="bold" font-size="6.500" fill="#fff">C:\.</text></svg></span>
    <span class="run"><svg viewBox="0 0 16 16"><ellipse cx="9" cy="6" rx="6.500" ry="6" fill="#c8321e"/><path d="M7 0l2 9M12 2 7 10" stroke="#eee" stroke-width="1.600"/><circle cx="5" cy="12" r="2" fill="none" stroke="#4aa3e8" stroke-width="1.400"/><circle cx="10.500" cy="13" r="2" fill="none" stroke="#4aa3e8" stroke-width="1.400"/></svg></span>
    <span class="run"><svg viewBox="0 0 16 16"><path d="M0 9.500Q0 4 6.500 4t6.500 4.500q0 2.500-2.500 2.500t-1 3.500Q0 17 0 9.500z" fill="#dfeaf5"/><circle cx="3.800" cy="8" r="1.400" fill="#e24"/><circle cx="7.500" cy="6.500" r="1.400" fill="#3a8be0"/><circle cx="4" cy="11.800" r="1.400" fill="#3b4"/><path d="M14 3v13" stroke="#d99a4e" stroke-width="2"/><path d="M12.500 0H15v4.500h-2.500z" fill="#f0d7a4"/></svg></span>
  </div>
  <div class="tray">
    <svg viewBox="0 0 12 8" width="12" height="8"><path d="M.7 7 6 1.500 11.300 7" fill="none" stroke="#fff" stroke-width="1.300"/></svg>
    <svg viewBox="0 0 12 16" width="12" height="16" fill="none" stroke="#fff" stroke-width="1.200"><rect x=".8" y="4.500" width="7" height="7" rx="1.500"/><path d="M8 7.500l3-1.500v4L8 8.500M2 1.200q4-1.200 8 0M2 14.800q4 1.200 8 0"/></svg>
    <svg width="16" height="14"><use href="#speaker"/></svg>
    <svg viewBox="0 0 16 11" width="16" height="11"><path d="M3.500 10.500a3.300 3.300 0 0 1 0-6.500 4.500 4.500 0 0 1 8.500 0 3.300 3.300 0 0 1 .5 6.500z" fill="#f4f4f4"/><path d="M3.500 4Q6-1 12 4L7 6z" fill="#bbb"/></svg>
    <svg viewBox="0 0 15 9" width="15" height="9"><path d="M.6.6h12v7.800H.6z" fill="none" stroke="#fff" stroke-width="1.200"/><path d="M2 2h8v5H2zM13 3h2v3h-2z" fill="#fff"/></svg>
    <svg viewBox="0 0 13 13" width="13" height="13" fill="none" stroke="#fff" stroke-width="1.200"><path d="M.7 12.500A12 12 0 0 1 12 1" stroke="#999"/><path d="M3.500 12.500A9 9 0 0 1 12 4M6.500 12.500A6 6 0 0 1 12 7"/><circle cx="11" cy="11" r="1.500" fill="#fff" stroke="none"/></svg>
    <svg width="16" height="14"><use href="#speaker"/></svg>
    <time>8:05 PM</time>
    <svg viewBox="0 0 17 16" width="17" height="16"><path d="M0 0h16v12H5.500v3.500L2.500 12H0z" fill="#fff"/><path d="M2.500 3.500h11M2.500 6.500h11M2.500 9.500h6" stroke="#222"/><circle cx="12.500" cy="12" r="3.500" fill="#fff" stroke="#222" stroke-width=".8"/><path d="M12 10v4h2" stroke="#222" fill="none"/></svg>
    <i class="edge"></i>
  </div>
</footer>
</body>
</html>
```

FILE: styles.css
```css
* { box-sizing: border-box; }
body {
  margin: 0;
  width: 1920px;
  height: 1080px;
  overflow: hidden;
  display: flex;
  flex-direction: column;
  background: #20242e;
  color: #e6e8eb;
  font: 12px/16px "Open Sans", "Noto Sans", sans-serif;
  letter-spacing: -0.25px;
}
ul, h3 { margin: 0; padding: 0; list-style: none; font-size: 12px; font-weight: normal; }
i, em { font-style: normal; }
svg { display: block; flex: none; }
.defs { position: absolute; }

/* small drop-down arrow */
.dd {
  width: 0; height: 0; flex: none;
  border: 2.5px solid transparent;
  border-top: 3px solid #b4b9c4;
  border-bottom: 0;
}
.dd.lg { border-width: 5px 4px 0; }
.dd.dim { border-top-color: #666b75; }
.vline { width: 1px; height: 20px; background: #596070; }

/* title bar */
.titlebar { height: 28px; flex: none; display: flex; background: #20242e; }
.qat {
  width: 675px; height: 22px; flex: none;
  display: grid; align-items: center; justify-items: center;
  grid-template-columns: 28px 26px 8px 30px 18px 30px 6px 30px 6px 14px 16px 32px 4px 32px 4px 34px 18px 100px 24px 99px 26px 24px 24px 22px 26px;
}
.combo {
  width: 100px; height: 21px; padding: 0 3px 0 4px;
  display: flex; align-items: center; justify-content: space-between;
  background: #3b4453; color: #7d8592; font-style: italic; letter-spacing: .1px;
}
.caption { flex: 1; padding: 4px 0 0 235px; white-space: nowrap; }
.caption span + span { margin-left: 12px; }
.account { height: 22px; display: flex; align-items: center; flex: none; width: 495px; }
.play { border: 3.5px solid transparent; border-left: 4px solid #9fc79f; border-right: 0; margin-right: 6px; }
.search { width: 178px; height: 18px; padding-left: 5px; background: #3b4453; line-height: 17px; margin-right: 6px; }
.account span { width: 60px; margin: 0 24px 0 6px; white-space: nowrap; }
.account .dd { margin-right: 13px; }
.account .vline { margin: 0 10px; }
.account svg:nth-of-type(3) { margin-right: 7px; }
.account .vline ~ .dd { margin-right: 51px; }
.account svg:nth-of-type(4) { margin-right: 15px; }
.account svg:nth-of-type(5) { margin-right: 12px; }

/* ribbon tabs */
.tabs {
  height: 20px; flex: none; padding-left: 1px;
  display: grid;
  grid-template-columns: 45px 73px 56px 71px 54px 70px 58px 47px 63px 45px 93px 78px 81px 117px 60px;
  background: #20242e; color: #a9afb9;
}
.tabs > span { text-align: center; line-height: 20px; white-space: nowrap; }
.tabs .file { background: #f8841f; color: #fff; }
.tabs .on { background: #3b4453; color: #f2f3f4; margin: 0 1px 0 3px; }
.minim { display: flex; align-items: center; gap: 6px; padding-left: 22px; }

/* ribbon */
.ribbon { height: 96px; flex: none; display: flex; background: #3b4453; border-bottom: 1px solid #1c2938; }
.panel { border-right: 1px solid #2a3240; display: flex; flex-direction: column; flex: none; }
.tools { height: 76px; padding-top: 6px; display: flex; }
.panel h3 {
  display: flex; justify-content: center; align-items: center; gap: 6px;
  height: 18px; color: #a9b0bc; letter-spacing: -0.1px; padding-right: 1px;
}
.big { display: flex; flex-direction: column; align-items: center; flex: none; }
.big b { font-weight: normal; text-align: center; line-height: 15px; margin-top: 4px; white-space: nowrap; }
.big > .dd { margin-top: 2px; }
.small li { display: flex; align-items: center; height: 18px; gap: 5px; margin-bottom: 6px; white-space: nowrap; }
.small .off { color: #687080; }
.small .dd { margin-left: 5px; }
.p-component { width: 97px; }
.p-component .big:first-child { width: 58px; }
.p-component .big + .big { width: 33px; }
.p-position { width: 95px; }
.p-position .small { padding-left: 7px; }
.p-position h3 { padding-right: 0; }
.p-relations { width: 184px; }
.p-relations .big { width: 43px; }
.p-relations .big + .big { width: 50px; }
.p-relations .small { padding-left: 9px; }
.p-pattern { width: 75px; }
.p-pattern .small { padding-left: 7px; }
.p-manage { width: 123px; }
.p-manage .big { width: 56px; }
.p-manage .big + .big { width: 62px; }
.p-product { width: 104px; }
.p-product .big { width: 92px; padding-left: 11px; margin-left: -1px; }
.side { margin: 50px 0 0 4px; }
.p-work { width: 128px; }
.p-work .big { width: 57px; }
.p-simple { width: 135px; }
.p-simple .big { width: 66px; }
.p-simple .big + .big { width: 65px; }
.more { display: flex; gap: 6px; padding: 6px 0 0 5px; height: 22px; align-items: center; }

/* work area */
.work { height: 882px; flex: none; display: flex; }
.browser { width: 152px; flex: none; display: flex; flex-direction: column; background: #3b4453; border-right: 4px solid #151b25; }
.btabs { height: 24px; flex: none; display: flex; align-items: center; background: #20252e; }
.btabs .cur { width: 58px; height: 24px; padding-left: 3px; margin-right: 5px; display: flex; align-items: center; gap: 9px; background: #3b4453; font-size: 11px; letter-spacing: -0.4px; }
.mag { margin: 0 8px 0 34px; }
.modes { height: 35px; flex: none; display: flex; align-items: center; padding: 0 0 2px 6px; font-size: 11px; letter-spacing: -0.45px; }
.modes .sel { width: 53px; padding-left: 3px; color: #49a9dd; border-bottom: 1px solid #49a9dd; }
.modes i { width: 2px; height: 13px; margin: 0 6px 0 5px; background: #9096a0; }
.treewrap { height: 805px; flex: none; display: flex; }
.tree {
  width: 130px; overflow: hidden; flex: none;
  font: 11px/20px "DejaVu Sans Condensed", "DejaVu Sans", sans-serif;
  font-stretch: condensed; letter-spacing: -0.3px;
  background: repeating-linear-gradient(#8b919b 0 1px, transparent 1px 3px) 8px 0 / 1px 789px no-repeat;
}
.tree li { display: flex; align-items: center; height: 20px; white-space: nowrap; padding-left: 4px; }
.tree li::before {
  content: ""; width: 9px; height: 9px; margin-right: 6px; flex: none;
  background: linear-gradient(#dfe2e6, #dfe2e6) 50% / 9px 2px no-repeat, linear-gradient(#dfe2e6, #dfe2e6) 50% / 2px 9px no-repeat;
}
.tree .leaf::before { background: repeating-linear-gradient(90deg, #8b919b 0 1px, transparent 1px 3px) 4px 4px / 5px 1px no-repeat; }
.tree svg { width: 15px; height: 15px; margin-right: 3px; }
.vscroll { width: 18px; display: flex; flex-direction: column; align-items: center; background: #353e4a; padding-top: 4px; }
.vscroll i { width: 17px; height: 618px; margin: 160px 0 6px; background: #506078; }
.hscroll { height: 18px; display: flex; align-items: center; padding-left: 7px; }
.hscroll i { width: 85px; height: 17px; margin: 0 15px 0 5px; background: #506078; }

.stage { width: 1768px; display: flex; flex-direction: column; }
.view { position: relative; height: 858px; background: linear-gradient(#fff, #d9d9d9 15%, #b4b4b4 32%, #929292 48%, #6e6e6e 64%, #484848 83%, #262626); }
.cube {
  position: absolute; left: 1679px; top: 59px; width: 54px; height: 54px;
  display: grid; place-items: center;
  background: #e9e9e9; border: 1px solid #777; box-shadow: 0 0 8px rgba(120, 120, 120, .45);
}
.cube span { width: 34px; height: 32px; background: #dcdcdd; text-align: center; font: bold 12px/32px "Open Sans", sans-serif; color: #85858f; letter-spacing: -0.3px; }
.navbar { position: absolute; left: 1733px; top: 144px; width: 34px; height: 231px; border-radius: 5px; background: rgba(215, 215, 215, .65); box-shadow: inset 0 0 0 1px #858585; }
.docs { height: 24px; display: flex; background: #20252f; color: #b4bac4; }
.docs span { background: #444c60; line-height: 20px; letter-spacing: -0.25px; white-space: nowrap; width: 75px; }
.docs .homeTab { width: 36px; padding: 4px 0 0 4px; }
.docs .on { width: 103px; padding: 0 13px 0 8px; display: flex; align-items: center; justify-content: space-between; background: #3b4453; color: #f0f1f3; border-bottom: 3px solid #37a6de; line-height: 18px; }
.docs .on svg { margin-top: -2px; }
.docs .on { padding-bottom: 1px; }
.docs .on + span { width: 75px; padding: 0 8px; }
.docs .on + span + span { width: 71px; padding: 0 8px; }
.burger { margin: 6px 5px 0 auto; }

.status { height: 24px; flex: none; display: flex; align-items: center; background: #303741; }
.status span { margin: 2px auto 0 1px; }
.status em { width: 40px; height: 21px; margin-bottom: 2px; border-left: 1px solid #e0e2e4; padding: 2px 0 0 9px; letter-spacing: 0; }
.status .last { width: 39px; padding-left: 7px; }

/* task bar */
.taskbar { height: 30px; display: flex; justify-content: space-between; background: #1e1e1f; }
.apps { display: flex; }
.apps span { width: 37px; height: 30px; display: grid; place-items: center; padding-bottom: 1px; }
.apps svg { width: 16px; height: 16px; }
.apps .run { background: linear-gradient(#f0a3d3, #f0a3d3) 50% 100% / 28px 2px no-repeat; }
.apps .active { background: linear-gradient(#f0a3d3, #f0a3d3) 50% 100% / 100% 2px no-repeat #4a4a4b; }
.apps .start { width: 38px; padding-right: 2px; }
.tray {
  display: grid; align-items: center; justify-items: center; width: 338px;
  grid-template-columns: 32px 32px 30px 35px 30px 35px 28px 63px 41px 12px;
}
.tray time { letter-spacing: -0.2px; white-space: nowrap; }
.edge { width: 1px; height: 30px; background: #6a6a6a; }
```
